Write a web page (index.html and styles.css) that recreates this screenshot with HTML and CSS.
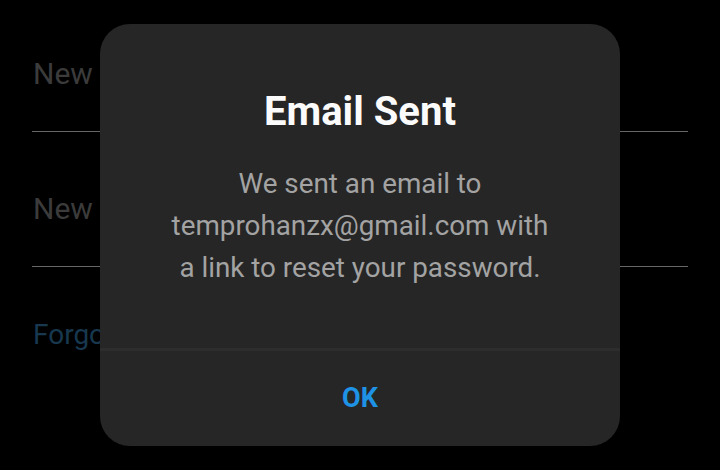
FILE: index.html
```html
<!DOCTYPE html>
<html>
<head>
<meta charset="utf-8">
<link rel="stylesheet" href="styles.css">
</head>
<body>
<div class="screen">
  <form class="form">
    <div class="field"><span class="placeholder">New password</span></div>
    <div class="field field-second"><span class="placeholder">New password again</span></div>
    <a class="forgot">Forgot password?</a>
  </form>
  <div class="dialog">
    <div class="dialog-body">
      <h1 class="title">Email Sent</h1>
      <p class="message">We sent an email to<br>temprohanzx@gmail.com with<br>a link to reset your password.</p>
    </div>
    <div class="dialog-actions">
      <button class="ok">OK</button>
    </div>
  </div>
</div>
</body>
</html>
```
FILE: styles.css
```css
* { box-sizing: border-box; }
html, body {
  margin: 0;
  padding: 0;
  background: #000;
  font-family: Roboto, "Liberation Sans", sans-serif;
}
.screen {
  position: relative;
  width: 720px;
  height: 470px;
  overflow: hidden;
  background: #000;
}
.form {
  display: flex;
  flex-direction: column;
  padding: 0 32px;
}
.field {
  height: 132px;
  border-bottom: 1px solid #666;
  display: flex;
  align-items: flex-start;
  padding: 0 0 0 1px;
  white-space: nowrap;
}
.field-second { height: 135px; }
.placeholder {
  font-size: 30px;
  color: #3b3b3b;
  line-height: 1;
  margin-top: 59px;
}
.field-second .placeholder { margin-top: 62px; }
.forgot {
  display: block;
  margin-top: 54px;
  margin-left: 1px;
  font-size: 28px;
  color: #17384e;
  line-height: 1;
  white-space: nowrap;
}
.dialog {
  position: absolute;
  left: 100px;
  top: 24px;
  width: 520px;
  height: 422px;
  background: #262626;
  border-radius: 30px;
  display: flex;
  flex-direction: column;
  overflow: hidden;
}
.dialog-body {
  height: 324px;
  display: flex;
  flex-direction: column;
  align-items: center;
  text-align: center;
}
.title {
  margin: 68px 0 0;
  font-size: 40px;
  font-weight: 700;
  color: #fbfbfb;
  line-height: 1;
}
.message {
  margin: 31px 0 0;
  font-size: 27.8px;
  line-height: 42px;
  color: #a3a3a3;
}
.dialog-actions {
  flex: 1;
  border-top: 3px solid #2d2d2d;
  display: flex;
  align-items: center;
  justify-content: center;
}
.ok {
  background: none;
  border: none;
  font-family: inherit;
  font-size: 27px;
  font-weight: 700;
  color: #1e93e6;
  padding: 0;
  margin-top: -1px;
}
```
